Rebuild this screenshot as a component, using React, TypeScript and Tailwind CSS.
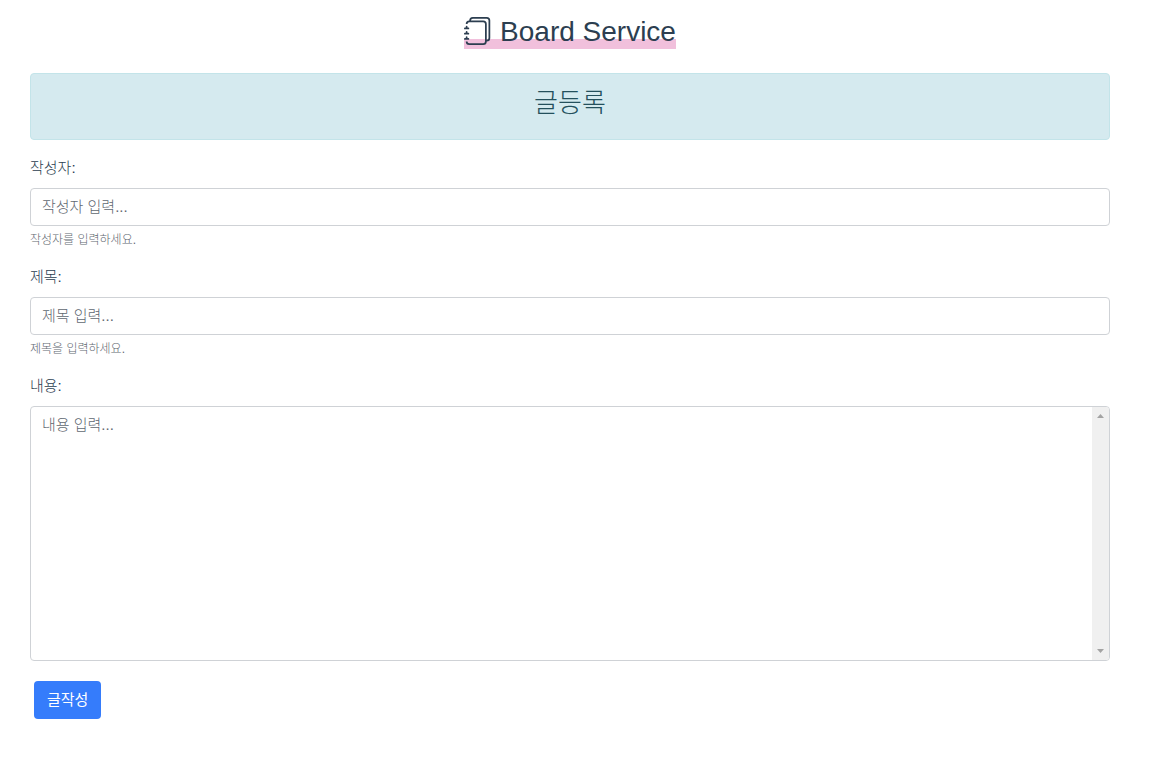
import { useId } from "react";
import { BsJournals } from "react-icons/bs";

function Field({ label, placeholder, help }: { label: string; placeholder: string; help: string }) {
  const id = useId();
  return (
    <div className="mb-4">
      <label htmlFor={id} className="mb-2 block text-[15px] leading-6">
        {label}
      </label>
      <input
        id={id}
        type="text"
        placeholder={placeholder}
        aria-describedby={`${id}-help`}
        className="block h-[38px] w-full rounded border border-[#cfd2d6] bg-white px-[11px] pb-0.5 text-[15px] leading-6 placeholder:text-[#5f6871] placeholder:opacity-100"
      />
      <p id={`${id}-help`} className="mt-1.5 text-xs leading-[17px] text-[#5f6871]">
        {help}
      </p>
    </div>
  );
}

export default function App() {
  return (
    <main className="bg-white pt-3.5 pr-[54px] pb-9 pl-[30px] font-['Liberation_Sans','Noto_Sans_CJK_KR',sans-serif] font-light text-[#2c3e50]">
      <header className="mb-6 flex justify-center">
        <h1 className="flex items-start gap-2 bg-linear-to-b from-transparent from-72% to-[#f1c0dc] to-72% text-[28px] leading-[35px]">
          <BsJournals className="mt-[3px] size-7" aria-hidden="true" />
          Board Service
        </h1>
      </header>

      <div className="mb-4 h-[67px] rounded border border-[#c3e4e9] bg-[#d5eaef] pt-3 text-center">
        <h2 className="text-[26px] leading-[34px] text-[#24505c]">글등록</h2>
      </div>

      <form onSubmit={(e) => e.preventDefault()}>
        <Field label="작성자:" placeholder="작성자 입력..." help="작성자를 입력하세요." />
        <Field label="제목:" placeholder="제목 입력..." help="제목을 입력하세요." />

        <div className="mb-5">
          <label htmlFor="content" className="mb-2 block text-[15px] leading-6">
            내용:
          </label>
          <div className="flex h-[255px] overflow-hidden rounded border border-[#cfd2d6]">
            <textarea
              id="content"
              placeholder="내용 입력..."
              className="block min-w-0 flex-1 resize-none px-[11px] py-1.5 text-[15px] leading-6 outline-none placeholder:text-[#5f6871] placeholder:opacity-100"
            />
            <div aria-hidden="true" className="flex w-[17px] flex-col items-center justify-between bg-[#f0f0f0] py-[7px] text-[#a3a3a3]">
              <svg width="7" height="4" viewBox="0 0 7 4" fill="currentColor">
                <path d="M3.5 0 7 4H0z" />
              </svg>
              <svg width="7" height="4" viewBox="0 0 7 4" fill="currentColor">
                <path d="M0 0h7L3.5 4z" />
              </svg>
            </div>
          </div>
        </div>

        <button type="submit" className="ml-1 h-[38px] rounded bg-[#357cfb] px-[13px] text-[15px] leading-6 font-normal text-white">
          글작성
        </button>
      </form>
    </main>
  );
}
